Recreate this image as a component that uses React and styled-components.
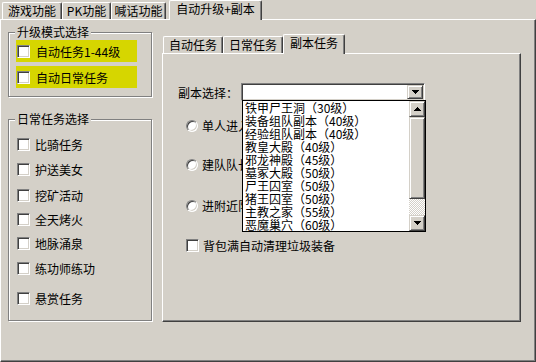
import React from 'react';
import styled, { createGlobalStyle, css } from 'styled-components';

const FACE = '#d4d0c8';

const GlobalStyle = createGlobalStyle`
  html, body { margin: 0; padding: 0; background: ${FACE}; }
  body {
    font: 12px "Noto Sans CJK SC", "Liberation Sans", sans-serif;
    color: #000;
  }
`;

const raised = css`
  box-sizing: border-box;
  background: ${FACE};
  border: 1px solid;
  border-color: ${FACE} #404040 #404040 ${FACE};
  box-shadow: inset 1px 1px #fff, inset -1px -1px #808080;
`;

const sunken = css`
  box-sizing: border-box;
  background: #fff;
  border: 1px solid;
  border-color: #808080 #fff #fff #808080;
  box-shadow: inset 1px 1px #404040, inset -1px -1px ${FACE};
`;

const Window = styled.div`
  width: 536px;
  height: 362px;
  display: flex;
  flex-direction: column;
  overflow: hidden;
`;

const TabRow = styled.div`
  flex: none;
  display: flex;
  align-items: flex-end;
  height: 19px;
  padding-left: ${p => p.$indent}px;
`;

const Tab = styled.div`
  position: relative;
  z-index: ${p => (p.$active ? 2 : 1)};
  box-sizing: border-box;
  width: ${p => p.$w}px;
  height: ${p => (p.$active ? 20 : 17)}px;
  margin: 0 0 ${p => (p.$active ? -1 : 0)}px ${p => p.$shift || 0}px;
  padding-bottom: ${p => (p.$active ? 3 : 0)}px;
  background: ${FACE};
  border-top: 1px solid #fff;
  border-left: 1px solid #fff;
  border-right: 1px solid #404040;
  box-shadow: inset -1px 0 #808080;
  border-radius: 2px 2px 0 0;
  display: flex;
  align-items: center;
  justify-content: center;
  white-space: nowrap;
  line-height: 14px;
`;

const Panel = styled.div`
  box-sizing: border-box;
  height: ${p => p.$h}px;
  border-top: 1px solid #fff;
  border-left: 1px solid #fff;
  border-right: 1px solid #404040;
  border-bottom: 1px solid #404040;
  box-shadow: inset -1px -1px #808080;
`;

const OuterBody = styled(Panel)`
  display: flex;
  gap: 10px;
  padding: 12px 0 0 7px;
`;

const LeftColumn = styled.div`
  width: 144px;
  display: flex;
  flex-direction: column;
  gap: 22px;
`;

const Group = styled.div`
  box-sizing: border-box;
  height: ${p => p.$h}px;
  border: 1px solid #808080;
  box-shadow: inset 1px 1px #fff, 1px 1px #fff;
  padding: 0 0 0 ${p => p.$pad}px;
  display: flex;
  flex-direction: column;
`;

const Legend = styled.div`
  width: fit-content;
  height: 12px;
  line-height: 12px;
  margin: -7px 0 0 ${p => 6 - p.$pad}px;
  padding: 0 2px;
  background: ${FACE};
  white-space: nowrap;
`;

const HighlightRow = styled.label`
  display: flex;
  align-items: center;
  gap: 6px;
  width: 121px;
  height: 22px;
  margin-top: ${p => p.$top}px;
  padding-left: 1px;
  box-sizing: border-box;
  background: #d6d600;
  white-space: nowrap;
`;

const CheckRow = styled.label`
  display: flex;
  align-items: center;
  gap: ${p => p.$gap || 5}px;
  height: 13px;
  margin-top: ${p => p.$top}px;
  white-space: nowrap;
`;

const CheckBox = styled.span`
  ${sunken};
  flex: none;
  width: 13px;
  height: 13px;
`;

const Radio = styled.span`
  ${sunken};
  flex: none;
  width: 12px;
  height: 12px;
  border-radius: 50%;
`;

const RightColumn = styled.div`
  width: 359px;
  margin-top: 2px;
  display: flex;
  flex-direction: column;
`;

const InnerBody = styled(Panel)`
  padding: 29px 0 0 15px;
  display: flex;
  flex-direction: column;
`;

const ComboRow = styled.div`
  display: flex;
  align-items: center;
  height: 18px;
`;

const FieldLabel = styled.span`
  width: 63px;
  white-space: nowrap;
`;

const Combo = styled.div`
  ${sunken};
  position: relative;
  z-index: 3;
  width: 184px;
  height: 18px;
  padding: 1px;
  display: flex;
  justify-content: flex-end;
`;

const ArrowButton = styled.span`
  ${raised};
  width: 16px;
  height: 100%;
  display: flex;
  align-items: center;
  justify-content: center;
`;

const DropList = styled.div`
  position: absolute;
  top: 100%;
  left: 0;
  box-sizing: border-box;
  width: 184px;
  height: 132px;
  border: 1px solid #000;
  background: #fff;
  display: flex;
`;

const Items = styled.div`
  flex: 1;
  display: flex;
  flex-direction: column;
  overflow: hidden;
`;

const Item = styled.div`
  height: 13px;
  line-height: 13px;
  padding-left: 2px;
  white-space: nowrap;
`;

const ScrollBar = styled.div`
  width: 16px;
  display: flex;
  flex-direction: column;
`;

const ScrollButton = styled.span`
  ${raised};
  height: 16px;
  display: flex;
  align-items: center;
  justify-content: center;
`;

const Thumb = styled.span`
  ${raised};
  height: 82px;
`;

const Track = styled.span`
  flex: 1;
  background: repeating-conic-gradient(${FACE} 0 25%, #fff 0 50%) 0 0 / 2px 2px;
`;

const OptionList = styled.div`
  display: flex;
  flex-direction: column;
  padding-left: 8px;
`;

const Arrow = ({ up }) => (
  <svg width="7" height="4" viewBox="0 0 7 4" style={{ transform: up ? 'scaleY(-1)' : 'none' }}>
    <path d="M0 0h7v1h-1v1h-1v1h-1v1h-1v-1h-1v-1h-1v-1h-1z" fill="#000" />
  </svg>
);

const dailyTasks = [
  ['比骑任务', 13],
  ['护送美女', 12],
  ['挖矿活动', 13],
  ['全天烤火', 11],
  ['地脉涌泉', 11],
  ['练功师练功', 12],
  ['悬赏任务', 17],
];

const dungeons = [
  '铁甲尸王洞（30级）',
  '装备组队副本（40级）',
  '经验组队副本（40级）',
  '教皇大殿（40级）',
  '邪龙神殿（45级）',
  '墓冢大殿（50级）',
  '尸王囚室（50级）',
  '猪王囚室（50级）',
  '主教之家（55级）',
  '恶魔巢穴（60级）',
];

export default function App() {
  return (
    <>
      <GlobalStyle />
      <Window>
        <TabRow $indent={2}>
          <Tab $w={60}>游戏功能</Tab>
          <Tab $w={49}>PK功能</Tab>
          <Tab $w={55}>喊话功能</Tab>
          <Tab $w={93} $shift={3} $active>自动升级+副本</Tab>
        </TabRow>
        <OuterBody $h={343}>
          <LeftColumn>
            <Group $h={65} $pad={7}>
              <Legend $pad={7}>升级模式选择</Legend>
              <HighlightRow $top={2}>
                <CheckBox />
                自动任务1-44级
              </HighlightRow>
              <HighlightRow $top={4}>
                <CheckBox />
                自动日常任务
              </HighlightRow>
            </Group>
            <Group $h={202} $pad={8}>
              <Legend $pad={8}>日常任务选择</Legend>
              {dailyTasks.map(([name, top]) => (
                <CheckRow key={name} $top={top}>
                  <CheckBox />
                  {name}
                </CheckRow>
              ))}
            </Group>
          </LeftColumn>
          <RightColumn>
            <TabRow $indent={1}>
              <Tab $w={60}>自动任务</Tab>
              <Tab $w={60}>日常任务</Tab>
              <Tab $w={62} $active>副本任务</Tab>
            </TabRow>
            <InnerBody $h={269}>
              <ComboRow>
                <FieldLabel>副本选择：</FieldLabel>
                <Combo>
                  <ArrowButton>
                    <Arrow />
                  </ArrowButton>
                  <DropList>
                    <Items>
                      {dungeons.map(d => (
                        <Item key={d}>{d}</Item>
                      ))}
                    </Items>
                    <ScrollBar>
                      <ScrollButton>
                        <Arrow up />
                      </ScrollButton>
                      <Thumb />
                      <Track />
                      <ScrollButton>
                        <Arrow />
                      </ScrollButton>
                    </ScrollBar>
                  </DropList>
                </Combo>
              </ComboRow>
              <OptionList>
                <CheckRow $top={18} $gap={4}>
                  <Radio />
                  单人进入副本
                </CheckRow>
                <CheckRow $top={26} $gap={4}>
                  <Radio />
                  建队队长模式
                </CheckRow>
                <CheckRow $top={28} $gap={4}>
                  <Radio />
                  进附近队伍
                </CheckRow>
                <CheckRow $top={27} $gap={4}>
                  <CheckBox />
                  背包满自动清理垃圾装备
                </CheckRow>
              </OptionList>
            </InnerBody>
          </RightColumn>
        </OuterBody>
      </Window>
    </>
  );
}
